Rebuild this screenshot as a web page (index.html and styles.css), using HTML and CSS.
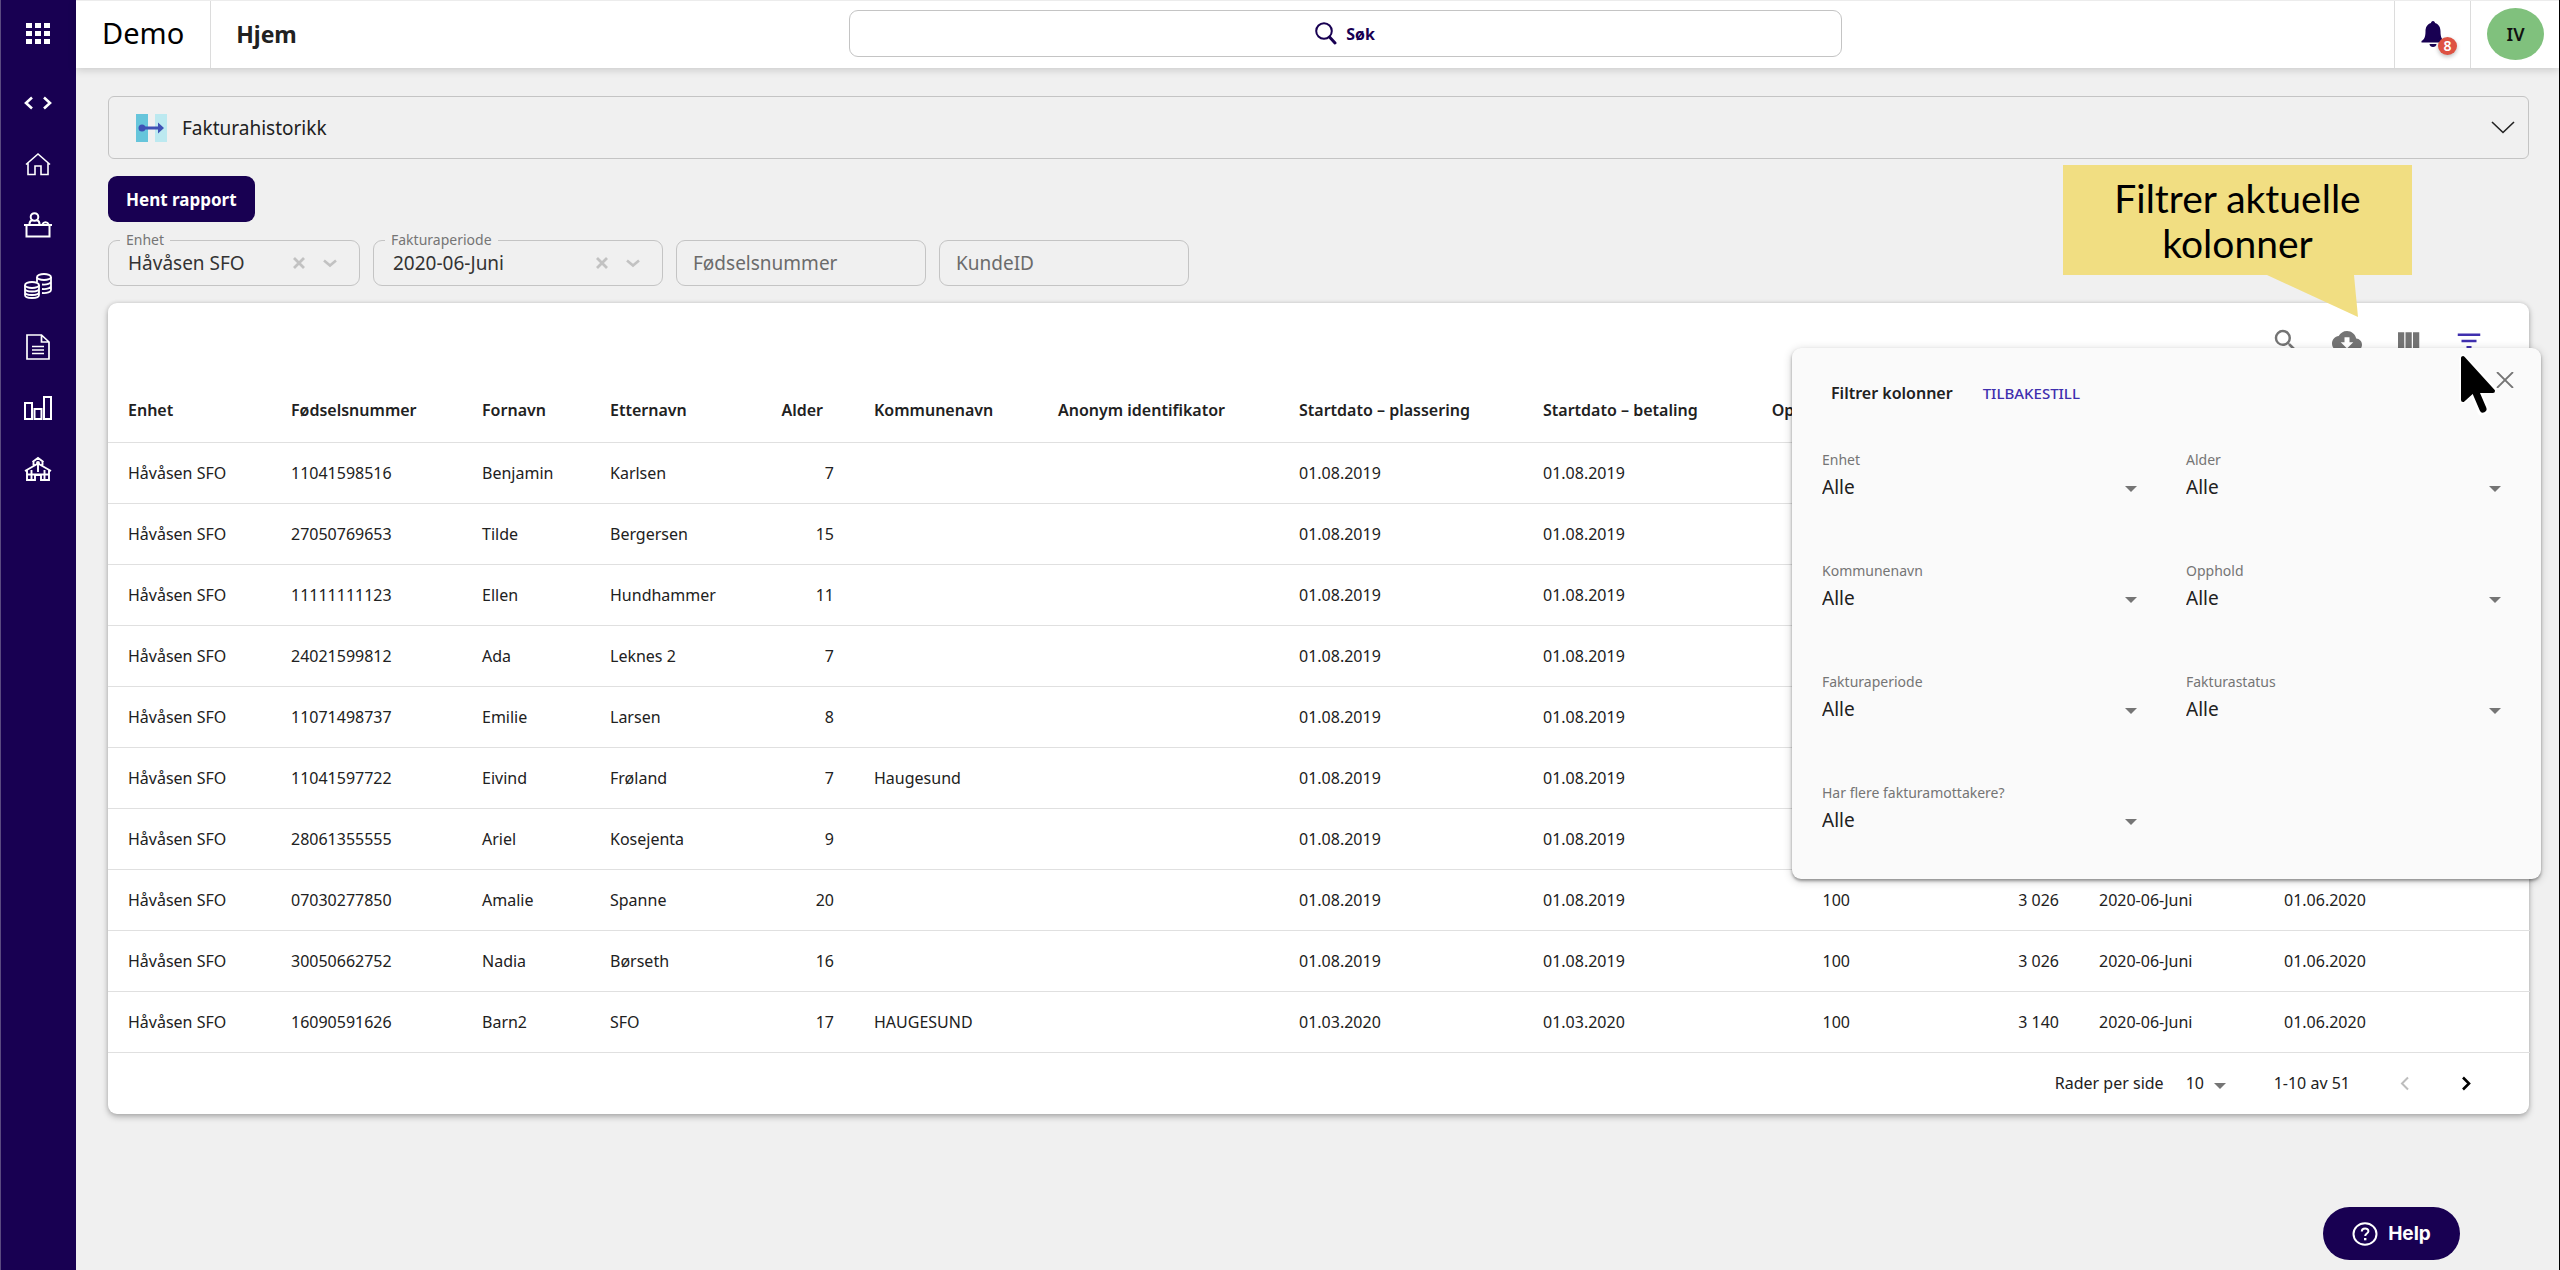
FILE: index.html
```html
<!DOCTYPE html>
<html lang="no">
<head>
  <meta charset="UTF-8" />
  <meta name="viewport" content="width=device-width, initial-scale=1.0"/>
  <title>Demo — Fakturahistorikk</title>
  <link rel="stylesheet" href="styles.css">
</head>
<body>
  <nav class="sidebar" aria-label="Hovedmeny">
    <button class="nav-btn apps" aria-label="Apper">
      <svg width="24" height="22" viewBox="0 0 24 22" fill="currentColor"><path d="M0 0h6v5H0zM9 0h6v5H9zM18 0h6v5h-6zM0 8h6v5H0zM9 8h6v5H9zM18 8h6v5h-6zM0 16h6v5H0zM9 16h6v5H9zM18 16h6v5h-6z"/></svg>
    </button>
    <button class="nav-btn" aria-label="Utvikler">
      <svg width="28" height="14" viewBox="0 0 28 14" fill="none" stroke="currentColor" stroke-width="2.6"><path d="M8 1.500 2 7l6 5.500M20 1.500 26 7l-6 5.500"/></svg>
    </button>
    <button class="nav-btn" aria-label="Hjem">
      <svg width="26" height="24" viewBox="0 0 26 24" fill="none" stroke="currentColor" stroke-width="1.600"><path d="M1 12.500 13 2l12 10.500M3 11v11.500h7V14h6v8.500h7V11"/></svg>
    </button>
    <button class="nav-btn" aria-label="Resepsjon">
      <svg width="28" height="26" viewBox="0 0 28 26" fill="none" stroke="currentColor" stroke-width="2"><path d="M0 13h28M2.500 13v11.500h23V13"/><circle cx="10.500" cy="5" r="3.800"/><path d="M5.500 12c0-2 1-3.500 3-4M15.500 12c0-2-1-3.500-3-4M18.500 12c1-2.500 5-2.500 6 0"/></svg>
    </button>
    <button class="nav-btn" aria-label="Økonomi">
      <svg width="28" height="26" viewBox="0 0 28 26" fill="none" stroke="currentColor" stroke-width="1.800"><ellipse cx="20" cy="4" rx="7" ry="3"/><path d="M13 4v5M27 4v13c0 2-4 3.500-9 3M27 8.500c0 2-4 3.500-9 3M27 13c0 2-4 3.500-9 3"/><ellipse cx="8" cy="12" rx="7" ry="3"/><path d="M1 12v10c0 4 14 4 14 0V12M1 15.500c0 4 14 4 14 0M1 19c0 4 14 4 14 0"/></svg>
    </button>
    <button class="nav-btn" aria-label="Dokumenter">
      <svg width="24" height="26" viewBox="0 0 24 26" fill="none" stroke="currentColor" stroke-width="1.700"><path d="M1 1h14.500L23 8v17H1zM15.500 1v7H23M6 12.500h12M6 16h12M6 19.500h12"/></svg>
    </button>
    <button class="nav-btn" aria-label="Rapporter">
      <svg width="28" height="24" viewBox="0 0 28 24" fill="none" stroke="currentColor" stroke-width="2"><path d="M1 7h7v16H1zM10.500 13h7v10h-7zM20 1h7v22h-7z"/></svg>
    </button>
    <button class="nav-btn" aria-label="Skole">
      <svg width="28" height="26" viewBox="0 0 28 26" fill="none" stroke="currentColor" stroke-width="1.900"><path d="M8.500 6 14 2l5.500 4M9.500 6v5M18.500 6v5M1 15l13-7.500L27 15M3 14v10h8v-5h6v5h8V14M3 18.500h22M7.500 14v9M20.500 14v9M14 9v7"/><circle cx="14" cy="7" r="1"/></svg>
    </button>
  </nav>

  <div class="page">
    <header class="topbar">
      <div class="titles">
        <div class="brand">Demo</div>
        <h1>Hjem</h1>
      </div>
      <button class="global-search">
        <svg width="22" height="23" viewBox="0 0 22 23" fill="none" stroke="currentColor" stroke-width="2"><circle cx="9" cy="9" r="7.800"/><path d="m14.500 15 5.500 6" stroke-width="3" stroke-linecap="round"/></svg>
        Søk
      </button>
      <div class="user-tools">
        <button class="bell" aria-label="Varsler">
          <svg width="24" height="28" viewBox="0 0 24 28" fill="currentColor"><path d="M12 0c1.200 0 2 1 2 2 4 1.200 5.500 4.500 5.500 8.500 0 6 1.500 8 4 9.500v1.500H.5V20c2.500-1.500 4-3.500 4-9.500C4.500 6.500 6 3.200 10 2c0-1 .8-2 2-2zM8.500 23h7c0 4-7 4-7 0z"/></svg>
          <span class="badge">8</span>
        </button>
        <button class="avatar">IV</button>
      </div>
    </header>

    <main>
      <button class="report-picker">
        <svg width="31" height="28" viewBox="0 0 31 28"><path fill="#66c5db" d="M0 0h12v28H0z"/><path fill="#bce9f0" d="M19 0h12v28H19z"/><circle cx="6" cy="14" r="3.500" fill="#3f51b5"/><path fill="#3f51b5" d="M6 12.600h16V8.500l6 5.500-6 5.500v-4.100H6z"/></svg>
        <span>Fakturahistorikk</span>
        <svg class="expand" width="24" height="13" viewBox="0 0 24 13" fill="none" stroke="currentColor" stroke-width="1.600"><path d="m1 1 11 10.500L23 1"/></svg>
      </button>

      <button class="primary-btn">Hent rapport</button>

      <form class="filters">
        <div class="field unit">
          <label for="enhet">Enhet</label>
          <select id="enhet"><option>Håvåsen SFO</option></select>
          <button type="button" class="clear" aria-label="Fjern enhet"><svg width="12" height="12" viewBox="0 0 12 12" stroke="currentColor" stroke-width="2.800"><path d="m1 1 10 10M11 1 1 11"/></svg></button>
          <svg class="chev" width="14" height="9" viewBox="0 0 14 9" fill="none" stroke="currentColor" stroke-width="2.600"><path d="m1 1.500 6 5 6-5"/></svg>
        </div>
        <div class="field period">
          <label for="periode">Fakturaperiode</label>
          <select id="periode"><option>2020-06-Juni</option></select>
          <button type="button" class="clear" aria-label="Fjern periode"><svg width="12" height="12" viewBox="0 0 12 12" stroke="currentColor" stroke-width="2.800"><path d="m1 1 10 10M11 1 1 11"/></svg></button>
          <svg class="chev" width="14" height="9" viewBox="0 0 14 9" fill="none" stroke="currentColor" stroke-width="2.600"><path d="m1 1.500 6 5 6-5"/></svg>
        </div>
        <input class="text-field" type="text" placeholder="Fødselsnummer" aria-label="Fødselsnummer">
        <input class="text-field" type="text" placeholder="KundeID" aria-label="KundeID">
      </form>

      <section class="card">
        <div class="toolbar">
          <button class="icon-btn" aria-label="Søk i tabell"><svg width="30" height="30" viewBox="0 0 24 24" fill="currentColor"><path d="M15.500 14h-.79l-.28-.27A6.471 6.471 0 0 0 16 9.500 6.500 6.500 0 1 0 9.500 16c1.610 0 3.090-.59 4.230-1.570l.27.28v.79l5 4.990L20.490 19l-4.990-5zm-6 0C7.010 14 5 11.990 5 9.500S7.010 5 9.500 5 14 7.010 14 9.500 11.990 14 9.500 14z"/></svg></button>
          <button class="icon-btn" aria-label="Last ned"><svg width="30" height="30" viewBox="0 0 24 24" fill="currentColor"><path d="M19.350 10.040C18.670 6.590 15.640 4 12 4 9.110 4 6.600 5.640 5.350 8.040 2.340 8.360 0 10.910 0 14c0 3.310 2.690 6 6 6h13c2.760 0 5-2.240 5-5 0-2.640-2.050-4.780-4.650-4.960zM17 13l-5 5-5-5h3V9h4v4h3z"/></svg></button>
          <button class="icon-btn" aria-label="Vis kolonner"><svg width="30" height="30" viewBox="0 0 24 24" fill="currentColor"><path d="M10 18h5V5h-5v13zm-6 0h5V5H4v13zM16 5v13h5V5h-5z"/></svg></button>
          <button class="icon-btn active" aria-label="Filtrer tabell"><svg width="30" height="30" viewBox="0 0 24 24" fill="currentColor"><path d="M10 18h4v-2h-4v2zM3 6v2h18V6H3zm3 7h12v-2H6v2z"/></svg></button>
        </div>

        <table>
          <colgroup>
            <col class="w-unit"><col class="w-id"><col class="w-first"><col class="w-last"><col class="w-age"><col class="w-mun"><col class="w-anon"><col class="w-place"><col class="w-pay"><col class="w-stay"><col class="w-sum"><col class="w-period"><col class="w-date">
          </colgroup>
          <thead>
            <tr><th>Enhet</th><th>Fødselsnummer</th><th>Fornavn</th><th>Etternavn</th><th class="num">Alder</th><th>Kommunenavn</th><th>Anonym identifikator</th><th>Startdato – plassering</th><th>Startdato – betaling</th><th class="num">Opphold</th><th></th><th></th><th></th></tr>
          </thead>
          <tbody>
            <tr><td>Håvåsen SFO</td><td>11041598516</td><td>Benjamin</td><td>Karlsen</td><td class="num">7</td><td></td><td></td><td>01.08.2019</td><td>01.08.2019</td><td></td><td></td><td></td><td></td></tr>
            <tr><td>Håvåsen SFO</td><td>27050769653</td><td>Tilde</td><td>Bergersen</td><td class="num">15</td><td></td><td></td><td>01.08.2019</td><td>01.08.2019</td><td></td><td></td><td></td><td></td></tr>
            <tr><td>Håvåsen SFO</td><td>11111111123</td><td>Ellen</td><td>Hundhammer</td><td class="num">11</td><td></td><td></td><td>01.08.2019</td><td>01.08.2019</td><td></td><td></td><td></td><td></td></tr>
            <tr><td>Håvåsen SFO</td><td>24021599812</td><td>Ada</td><td>Leknes 2</td><td class="num">7</td><td></td><td></td><td>01.08.2019</td><td>01.08.2019</td><td></td><td></td><td></td><td></td></tr>
            <tr><td>Håvåsen SFO</td><td>11071498737</td><td>Emilie</td><td>Larsen</td><td class="num">8</td><td></td><td></td><td>01.08.2019</td><td>01.08.2019</td><td></td><td></td><td></td><td></td></tr>
            <tr><td>Håvåsen SFO</td><td>11041597722</td><td>Eivind</td><td>Frøland</td><td class="num">7</td><td>Haugesund</td><td></td><td>01.08.2019</td><td>01.08.2019</td><td></td><td></td><td></td><td></td></tr>
            <tr><td>Håvåsen SFO</td><td>28061355555</td><td>Ariel</td><td>Kosejenta</td><td class="num">9</td><td></td><td></td><td>01.08.2019</td><td>01.08.2019</td><td></td><td></td><td></td><td></td></tr>
            <tr><td>Håvåsen SFO</td><td>07030277850</td><td>Amalie</td><td>Spanne</td><td class="num">20</td><td></td><td></td><td>01.08.2019</td><td>01.08.2019</td><td class="num">100</td><td class="num">3 026</td><td>2020-06-Juni</td><td>01.06.2020</td></tr>
            <tr><td>Håvåsen SFO</td><td>30050662752</td><td>Nadia</td><td>Børseth</td><td class="num">16</td><td></td><td></td><td>01.08.2019</td><td>01.08.2019</td><td class="num">100</td><td class="num">3 026</td><td>2020-06-Juni</td><td>01.06.2020</td></tr>
            <tr><td>Håvåsen SFO</td><td>16090591626</td><td>Barn2</td><td>SFO</td><td class="num">17</td><td>HAUGESUND</td><td></td><td>01.03.2020</td><td>01.03.2020</td><td class="num">100</td><td class="num">3 140</td><td>2020-06-Juni</td><td>01.06.2020</td></tr>
          </tbody>
        </table>

        <div class="pager">
          <label for="rows">Rader per side</label>
          <div class="rows-select">
            <select id="rows"><option>10</option></select>
          </div>
          <span class="range">1-10 av 51</span>
          <button class="page-btn" aria-label="Forrige side" disabled><svg width="10" height="15" viewBox="0 0 10 15" fill="none" stroke="currentColor" stroke-width="2"><path d="M8 1.500 2 7.500l6 6"/></svg></button>
          <button class="page-btn" aria-label="Neste side"><svg width="10" height="15" viewBox="0 0 10 15" fill="none" stroke="currentColor" stroke-width="2.600"><path d="m2 1.500 6 6-6 6"/></svg></button>
        </div>

        <div class="popover">
          <div class="popover-head">
            <h2>Filtrer kolonner</h2>
            <button class="reset">Tilbakestill</button>
            <button class="close" aria-label="Lukk"><svg width="18" height="16" viewBox="0 0 18 16" stroke="currentColor" stroke-width="1.800"><path d="m1 0 16 16M17 0 1 16"/></svg></button>
          </div>
          <div class="popover-grid">
            <div class="pick"><label for="f1">Enhet</label><select id="f1"><option>Alle</option></select></div>
            <div class="pick"><label for="f2">Alder</label><select id="f2"><option>Alle</option></select></div>
            <div class="pick"><label for="f3">Kommunenavn</label><select id="f3"><option>Alle</option></select></div>
            <div class="pick"><label for="f4">Opphold</label><select id="f4"><option>Alle</option></select></div>
            <div class="pick"><label for="f5">Fakturaperiode</label><select id="f5"><option>Alle</option></select></div>
            <div class="pick"><label for="f6">Fakturastatus</label><select id="f6"><option>Alle</option></select></div>
            <div class="pick"><label for="f7">Har flere fakturamottakere?</label><select id="f7"><option>Alle</option></select></div>
          </div>
        </div>

        <div class="callout">
          Filtrer aktuelle<br>kolonner
          <svg class="tail" width="92" height="42" viewBox="0 0 92 42"><path fill="#f1de82" d="M0 0h87l4 42z"/></svg>
        </div>
        <svg class="pointer" width="38" height="62" viewBox="0 0 38 62"><path d="M4 4v42l9.500-8 8.500 20 5-2.500L18.500 35H34z" fill="#000" stroke="#fff" stroke-width="7" stroke-linejoin="round"/><path d="M4 4v42l10-9h20z" stroke="#000" stroke-width="4" stroke-linejoin="round"/><path d="m15 34 9 21" stroke="#000" stroke-width="7" stroke-linecap="round"/></svg>
      </section>
    </main>
  </div>

  <button class="help">
    <svg width="26" height="24" viewBox="0 0 26 24" fill="none" stroke="currentColor" stroke-width="2"><ellipse cx="13" cy="12" rx="11.500" ry="10.800"/><path d="M9.800 9.500c0-4.200 6.600-4 6.600-.3 0 2.300-3.200 2.300-3.200 4.800"/><path d="M13.200 16v2.300" stroke-width="2.400"/></svg>
    Help
  </button>
</body>
</html>
```
FILE: styles.css
```css
:root {
  --navy: #180052;
  --bg: #f0f0f0;
  --border: #c4c4c4;
  --line: #e0e0e0;
  --text: #212121;
  --text-soft: #757575;
  --accent: #3f2fae;
  --note: #f1de82;
}
* { box-sizing: border-box; }
html, body {
  margin: 0;
  min-height: 100vh;
  background: var(--bg);
  color: var(--text);
  font-family: "Noto Sans", "Open Sans", sans-serif;
  font-size: 16px;
}
body {
  display: flex;
  border-left: 1px solid #5b4a80;
  border-right: 1px solid #000;
}
button, input, select {
  font: inherit;
  color: inherit;
  margin: 0;
}
button {
  border: none;
  background: none;
  padding: 0;
  cursor: pointer;
}
select {
  appearance: none;
  border: none;
  background: none;
  padding: 0;
}
svg { display: block; flex: none; }

/* sidebar */
.sidebar {
  flex: none;
  width: 75px;
  padding-right: 2px;
  background: var(--navy);
  color: #fff;
}
.nav-btn {
  display: flex;
  align-items: center;
  justify-content: center;
  width: 100%;
  height: 61px;
}
.nav-btn.apps {
  height: 67px;
  margin-bottom: 5px;
}

/* top bar */
.page { flex: 1; min-width: 0; }
.topbar {
  display: flex;
  align-items: stretch;
  height: 68px;
  background: #fff;
  border-top: 1px solid #ececec;
  box-shadow: 0 2px 8px rgba(0,0,0,0.16);
}
.titles {
  flex: 14 1 0;
  display: flex;
}
.brand {
  padding: 0 26px;
  font-size: 29px;
  line-height: 64px;
  color: #000;
  border-right: 1px solid #dcdcdc;
}
h1 {
  margin: 0;
  padding-left: 25px;
  font-size: 23px;
  line-height: 66px;
  font-weight: 700;
}
.global-search {
  display: flex;
  align-items: center;
  justify-content: center;
  gap: 9px;
  width: 40%;
  height: 47px;
  margin: 9px 0;
  border: 1px solid var(--border);
  border-radius: 9px;
  color: var(--navy);
  font-weight: 700;
  font-size: 16px;
}
.user-tools {
  flex: 13 1 0;
  display: flex;
  justify-content: flex-end;
}
.bell {
  position: relative;
  display: flex;
  align-items: center;
  justify-content: center;
  width: 77px;
  border: solid #dcdcdc;
  border-width: 0 1px;
  color: var(--navy);
}
.badge {
  position: absolute;
  left: 43px;
  top: 36px;
  width: 19px;
  height: 18px;
  border-radius: 50%;
  background: #de5242;
  color: #fff;
  font-size: 14px;
  font-weight: 600;
  line-height: 18px;
  box-shadow: 0 2px 4px rgba(0,0,0,0.25);
}
.avatar {
  width: 57px;
  height: 52px;
  margin: 7px 15px 0 16px;
  border-radius: 50%;
  background: #80c17d;
  color: #111;
  font-weight: 600;
  font-size: 18px;
}

/* report picker and filters */
main { padding: 28px 30px 40px 32px; }
.report-picker {
  display: flex;
  align-items: center;
  gap: 15px;
  width: 100%;
  height: 63px;
  padding: 0 13px 0 27px;
  border: 1px solid var(--border);
  border-radius: 6px;
  font-size: 19px;
}
.expand { margin-left: auto; }
.primary-btn {
  height: 46px;
  margin-top: 17px;
  padding: 0 18px;
  border-radius: 9px;
  background: var(--navy);
  color: #fff;
  font-weight: 700;
  font-size: 17px;
}
.filters {
  display: flex;
  gap: 13px;
  margin-top: 18px;
}
.field {
  position: relative;
  display: flex;
  align-items: center;
  gap: 18px;
  height: 46px;
  padding: 0 22px 0 19px;
  border: 1px solid var(--border);
  border-radius: 9px;
  color: #c2c2c2;
}
.field.unit { width: 252px; }
.field.period { width: 290px; }
.field label {
  position: absolute;
  left: 11px;
  top: -11px;
  padding: 0 6px;
  background: var(--bg);
  color: var(--text-soft);
  font-size: 14px;
  line-height: 20px;
}
.field select {
  flex: 1;
  min-width: 0;
  height: 100%;
  color: #333;
  font-size: 19px;
}
.text-field {
  width: 250px;
  height: 46px;
  padding: 0 16px;
  border: 1px solid var(--border);
  border-radius: 9px;
  background: none;
  font-size: 19px;
}
.text-field::placeholder { color: #6b6b6b; opacity: 1; }

/* table card */
.card {
  position: relative;
  margin-top: 17px;
  background: #fff;
  border-radius: 9px;
  box-shadow: 0 3px 6px rgba(0,0,0,0.26), 0 0 4px rgba(0,0,0,0.12);
}
.toolbar {
  display: flex;
  align-items: center;
  justify-content: flex-end;
  gap: 31px;
  height: 76px;
  padding-right: 45px;
  color: #747474;
}
.icon-btn.active { color: var(--accent); }
table {
  width: 100%;
  table-layout: fixed;
  border-collapse: collapse;
}
.w-unit { width: 163px; }
.w-id { width: 191px; }
.w-first { width: 128px; }
.w-last { width: 169px; }
.w-age { width: 95px; }
.w-mun { width: 184px; }
.w-anon { width: 241px; }
.w-place { width: 244px; }
.w-pay { width: 222px; }
.w-stay { width: 125px; }
.w-sum { width: 209px; }
.w-period { width: 185px; }
.w-date { width: 266px; }
th, td {
  height: 61px;
  padding: 0 20px;
  border-bottom: 1px solid var(--line);
  text-align: left;
  white-space: nowrap;
  font-size: 16px;
}
th {
  height: 63px;
  font-weight: 600;
}
td.num, th.num { text-align: right; }
th.num { padding-right: 31px; }
.pager {
  display: flex;
  align-items: center;
  justify-content: flex-end;
  height: 61px;
  padding-right: 38px;
}
.rows-select, .pick { position: relative; }
.rows-select { margin: 0 48px 0 22px; }
.rows-select select { width: 40px; }
.rows-select::after, .pick::after {
  content: "";
  position: absolute;
  right: 0;
  top: 50%;
  border: 6px solid transparent;
  border-top-color: var(--text-soft);
  border-bottom: none;
  pointer-events: none;
}
.range { margin-right: 30px; }
.page-btn {
  display: flex;
  align-items: center;
  justify-content: center;
  width: 50px;
  height: 50px;
  margin-left: 11px;
  color: #000;
}
.range + .page-btn { margin-left: 0; }
.page-btn:disabled { color: #bdbdbd; }

/* filter popover */
.popover {
  position: absolute;
  right: -12px;
  top: 45px;
  width: 749px;
  padding: 0 35px 44px 30px;
  background: #fafafa;
  border-radius: 9px;
  box-shadow: 0 2px 3px rgba(0,0,0,0.35), 0 2px 10px rgba(0,0,0,0.2);
}
.popover-head {
  display: flex;
  align-items: center;
  height: 90px;
  padding-left: 9px;
}
.popover-head h2 {
  margin: 0 30px 0 0;
  font-size: 16px;
  font-weight: 600;
}
.reset {
  color: var(--accent);
  font-size: 15px;
  font-weight: 500;
  text-transform: uppercase;
}
.close {
  margin: 0 -8px 26px auto;
  color: var(--text-soft);
}
.popover-grid {
  display: grid;
  grid-template-columns: 1fr 1fr;
  gap: 59px 44px;
  padding-top: 12px;
}
.pick {
  display: flex;
  flex-direction: column;
  gap: 2px;
}
.pick label {
  color: var(--text-soft);
  font-size: 14px;
  line-height: 20px;
}
.pick select {
  height: 30px;
  font-size: 19px;
}
.pick::after { right: 5px; top: 36px; }

/* guide note and cursor lying over the card */
.callout {
  position: absolute;
  right: 117px;
  top: -138px;
  width: 349px;
  height: 110px;
  padding: 11px 0;
  background: var(--note);
  color: #000;
  text-align: center;
  font-family: Lato, sans-serif;
  font-size: 39px;
  line-height: 45px;
}
.tail {
  position: absolute;
  left: 204px;
  top: 110px;
}
.pointer {
  position: absolute;
  right: 32px;
  top: 51px;
}

.help {
  position: fixed;
  right: 100px;
  bottom: 10px;
  display: flex;
  align-items: center;
  justify-content: center;
  gap: 10px;
  width: 137px;
  height: 53px;
  border-radius: 27px;
  background: var(--navy);
  color: #fff;
  font-family: Inter, sans-serif;
  font-weight: 700;
  font-size: 19px;
}
```
